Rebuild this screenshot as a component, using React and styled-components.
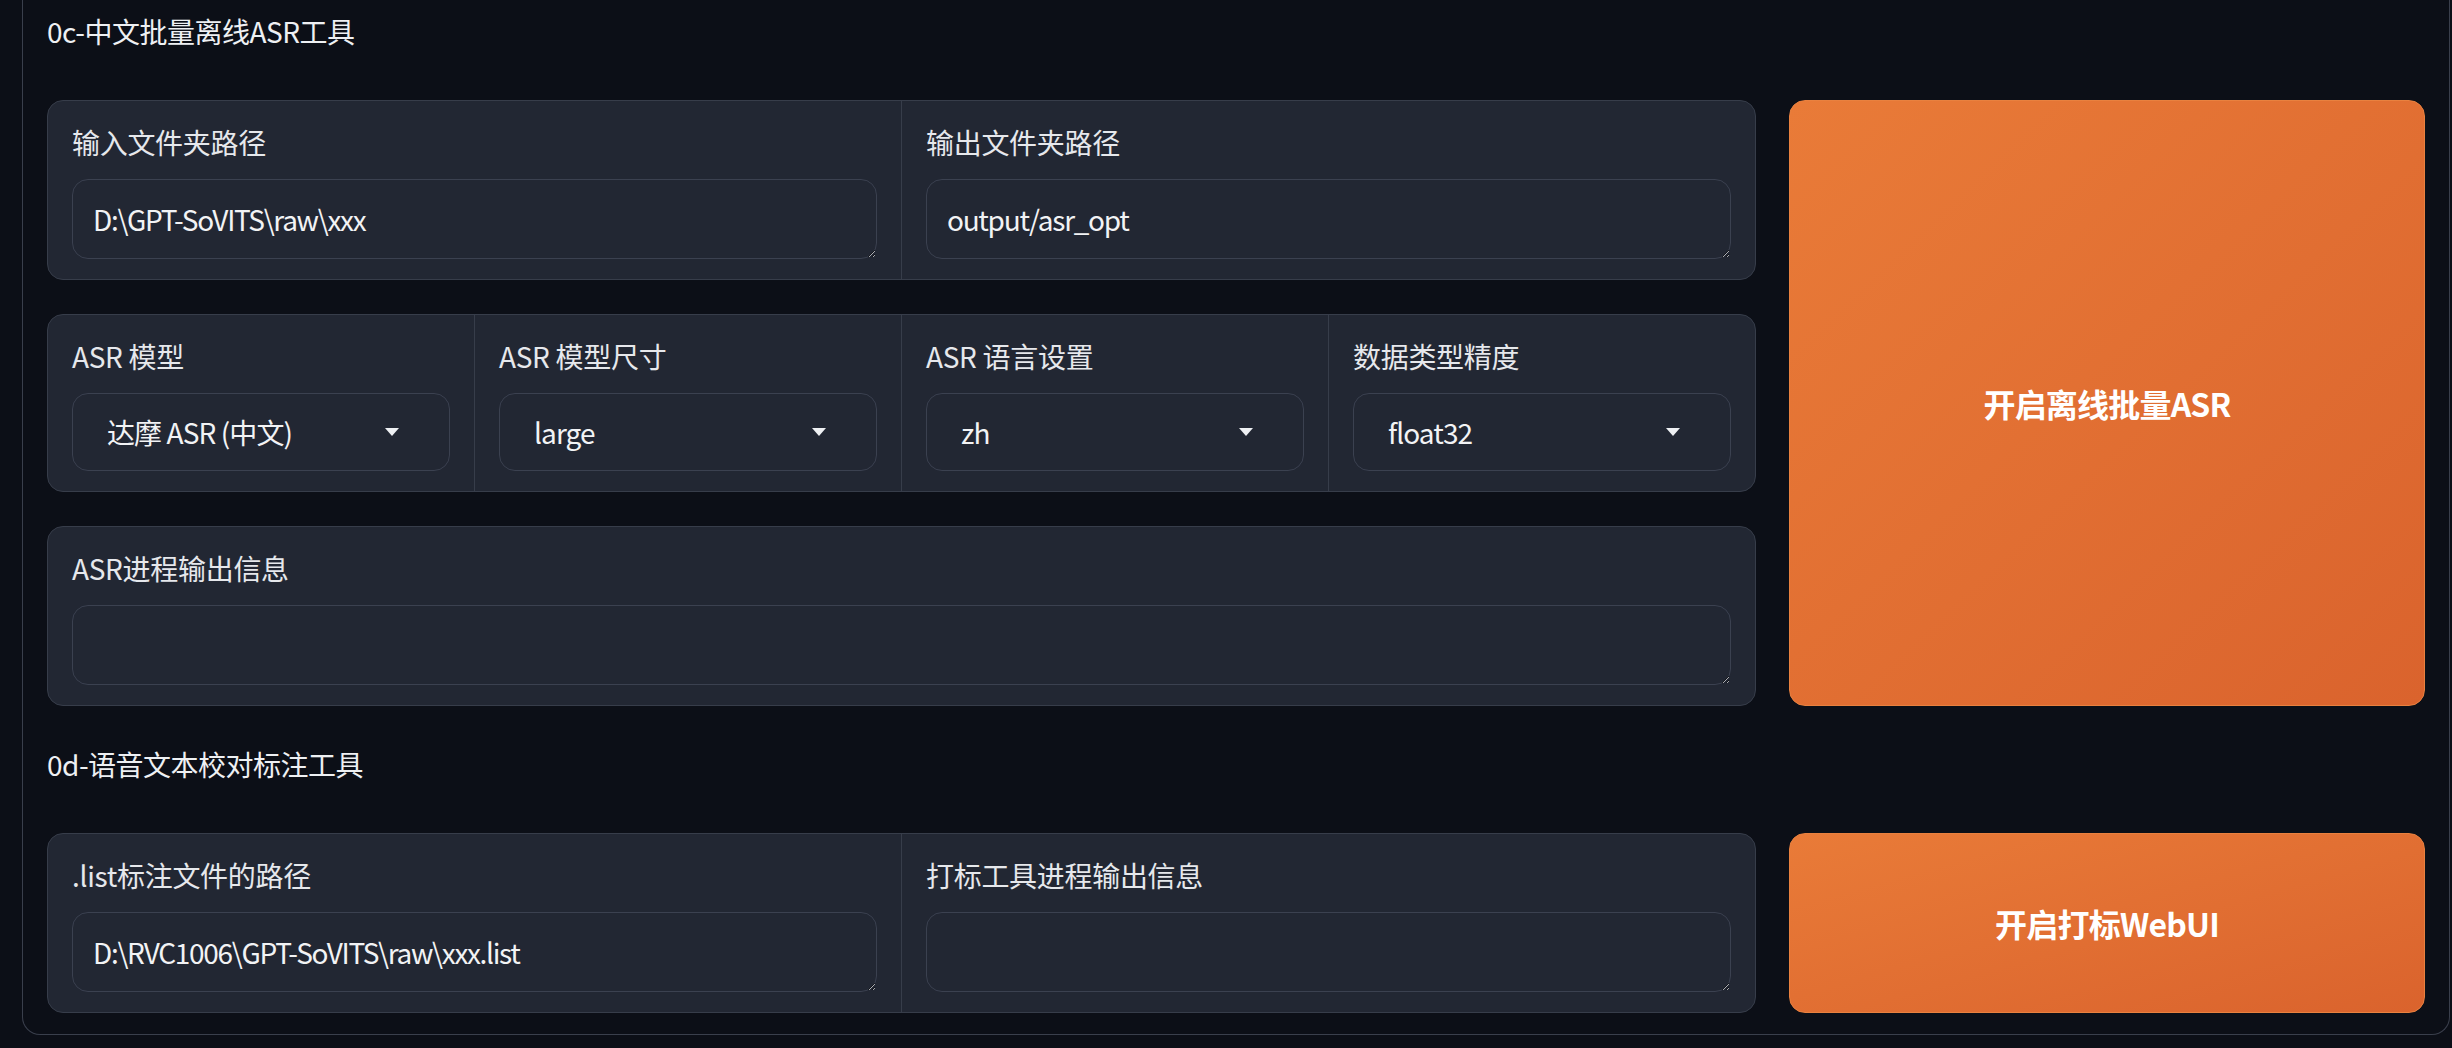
import React from "react";
import styled, { createGlobalStyle } from "styled-components";

const GlobalStyle = createGlobalStyle`
  html, body {
    margin: 0;
    padding: 0;
    background: #0c0f17;
  }
  body {
    font-family: "Noto Sans CJK SC", "Noto Sans", sans-serif;
    color: #e8e9ec;
  }
`;

const Page = styled.div`
  min-height: 1048px;
  padding: 0 2px 14px 22px;
  box-sizing: border-box;
  background: #0c0f17;
`;

const Panel = styled.div`
  border: 1px solid #3a3f4c;
  border-top: none;
  border-radius: 0 0 18px 18px;
  padding: 5px 24px 21px;
  display: flex;
  flex-direction: column;
  gap: 32px;
`;

const Title = styled.div`
  font-size: 28px;
  line-height: 42px;
  padding: 5px 0 16px;
  letter-spacing: -0.5px;
  color: #eef0f3;
`;

const Row = styled.div`
  display: grid;
  grid-template-columns: minmax(0, 1709fr) minmax(0, 636fr);
  gap: 33px;
`;

const Stack = styled.div`
  display: flex;
  flex-direction: column;
  gap: 34px;
`;

const Card = styled.div`
  display: flex;
  background: #222733;
  border: 1px solid #373d4a;
  border-radius: 16px;
  overflow: hidden;
`;

const Field = styled.div`
  flex: 1 1 0;
  min-width: 0;
  padding: 20px 24px;
  display: flex;
  flex-direction: column;
  gap: 16px;

  & + & {
    border-left: 1px solid #373d4a;
  }
`;

const Label = styled.span`
  font-size: 28px;
  line-height: 42px;
  letter-spacing: -0.3px;
  color: #e6e8ec;
`;

const TextArea = styled.textarea`
  box-sizing: border-box;
  width: 100%;
  height: 80px;
  padding: 19px 20px;
  font-family: "Noto Sans CJK SC", "Noto Sans", sans-serif;
  font-size: 28px;
  line-height: 40px;
  letter-spacing: -1.3px;
  color: #f2f3f5;
  background: #222733;
  border: 1px solid #3b4150;
  border-radius: 16px;
  outline: none;
  resize: vertical;
  color-scheme: dark;
  overflow: hidden;
`;

const Select = styled.div`
  box-sizing: border-box;
  height: 78px;
  display: flex;
  align-items: center;
  justify-content: space-between;
  padding: 0 50px 0 34px;
  border: 1px solid #3b4150;
  border-radius: 16px;
  background: #222733;
  font-size: 28px;
  letter-spacing: -0.9px;
  color: #f2f3f5;
`;

const Caret = styled.span`
  width: 0;
  height: 0;
  border-left: 7px solid transparent;
  border-right: 7px solid transparent;
  border-top: 8px solid #eef0f3;
`;

const ActionButton = styled.button`
  border: 1px solid #e9813f;
  border-radius: 16px;
  background: linear-gradient(to bottom right, #e97b38, #da632d);
  color: #ffffff;
  font-family: "Noto Sans CJK SC", "Noto Sans", sans-serif;
  font-size: 32px;
  font-weight: 700;
  letter-spacing: -0.8px;
  cursor: pointer;
`;

const Dropdown = ({ label, value }) => (
  <Field>
    <Label>{label}</Label>
    <Select>
      <span>{value}</span>
      <Caret />
    </Select>
  </Field>
);

const TextField = ({ label, value }) => (
  <Field>
    <Label>{label}</Label>
    <TextArea defaultValue={value} rows={1} />
  </Field>
);

export default function App() {
  return (
    <Page>
      <GlobalStyle />
      <Panel>
        <div>
          <Title>0c-中文批量离线ASR工具</Title>
        </div>
        <Row>
          <Stack>
            <Card>
              <TextField label="输入文件夹路径" value={"D:\\GPT-SoVITS\\raw\\xxx"} />
              <TextField label="输出文件夹路径" value="output/asr_opt" />
            </Card>
            <Card>
              <Dropdown label="ASR 模型" value="达摩 ASR (中文)" />
              <Dropdown label="ASR 模型尺寸" value="large" />
              <Dropdown label="ASR 语言设置" value="zh" />
              <Dropdown label="数据类型精度" value="float32" />
            </Card>
            <Card>
              <TextField label="ASR进程输出信息" value="" />
            </Card>
          </Stack>
          <ActionButton>开启离线批量ASR</ActionButton>
        </Row>
        <div>
          <Title>0d-语音文本校对标注工具</Title>
        </div>
        <Row>
          <Card>
            <TextField
              label=".list标注文件的路径"
              value={"D:\\RVC1006\\GPT-SoVITS\\raw\\xxx.list"}
            />
            <TextField label="打标工具进程输出信息" value="" />
          </Card>
          <ActionButton>开启打标WebUI</ActionButton>
        </Row>
      </Panel>
    </Page>
  );
}
